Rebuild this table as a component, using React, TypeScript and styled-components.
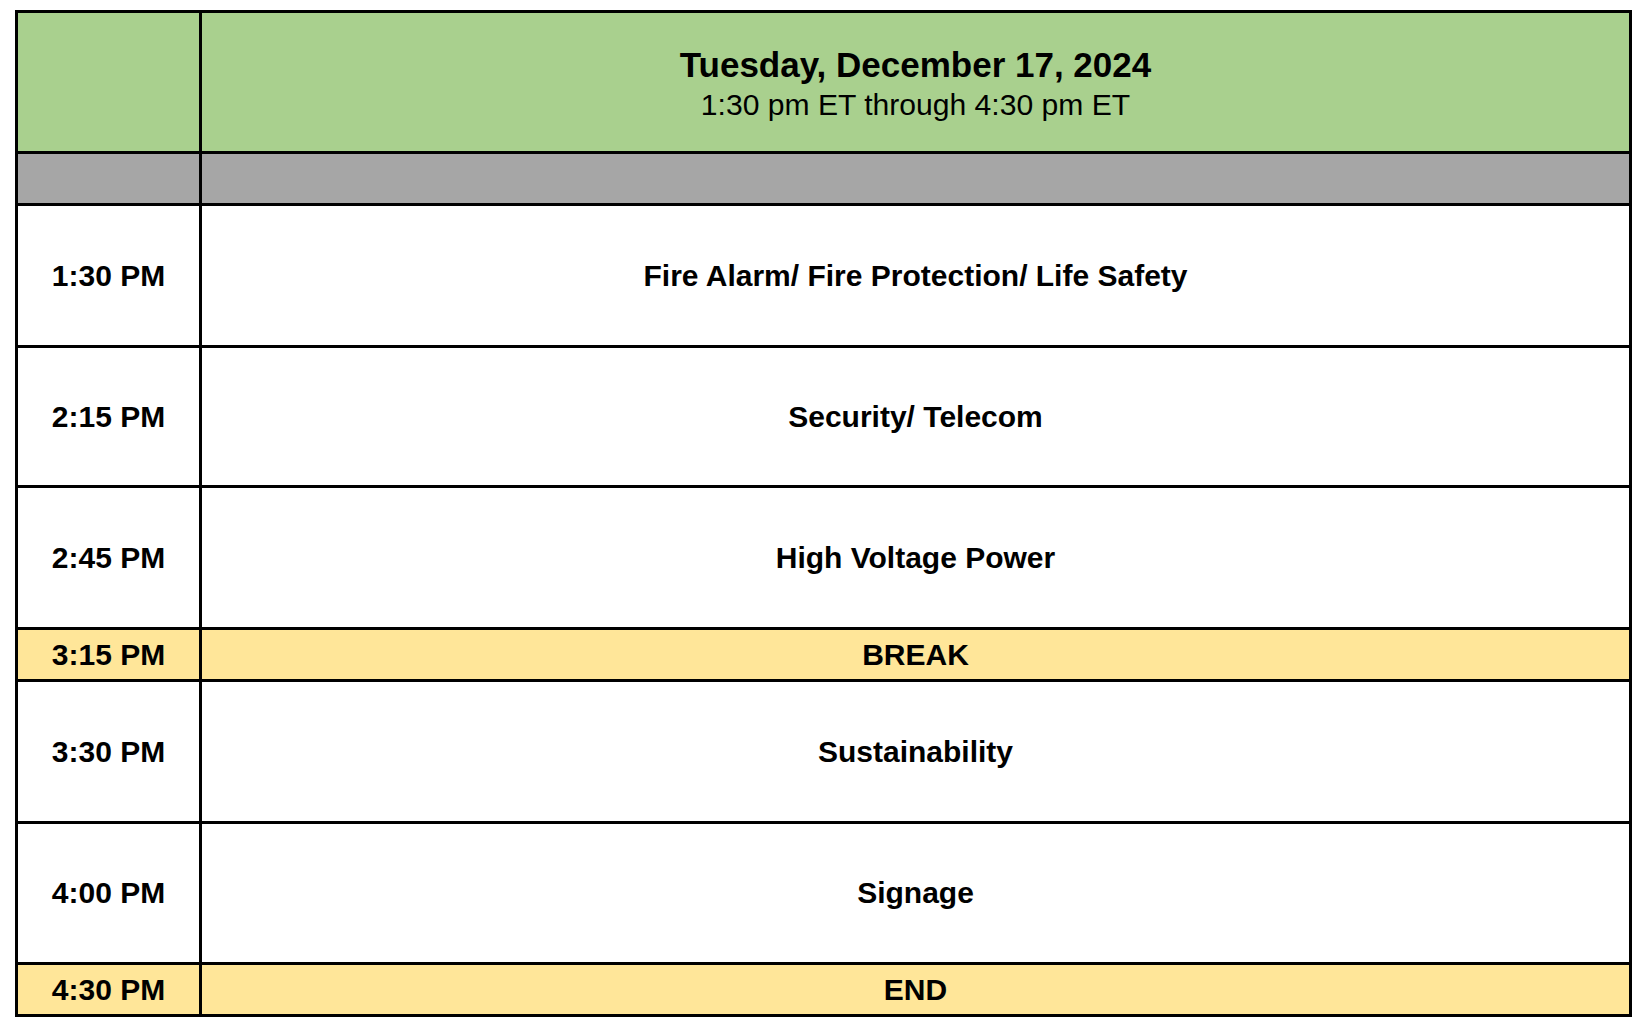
import React from "react";
import styled, { createGlobalStyle } from "styled-components";

const GlobalStyle = createGlobalStyle`
  html, body {
    margin: 0;
    padding: 0;
    background: #ffffff;
  }
  body {
    font-family: "Liberation Sans", Arial, sans-serif;
    color: #000000;
  }
`;

const Page = styled.div`
  padding: 10px 0 0 15px;
`;

const Schedule = styled.div`
  display: grid;
  grid-template-columns: 181px 1427px;
  gap: 3px;
  padding: 3px;
  width: max-content;
  background: #000000;
`;

type Tone = "green" | "gray" | "white" | "yellow";

const toneColors: Record<Tone, string> = {
  green: "#a9d08e",
  gray: "#a6a6a6",
  white: "#ffffff",
  yellow: "#ffe699",
};

const Cell = styled.div<{ $tone: Tone; $h: number }>`
  height: ${(p) => p.$h}px;
  background: ${(p) => toneColors[p.$tone]};
  display: flex;
  flex-direction: column;
  align-items: center;
  justify-content: center;
  text-align: center;
  font-weight: 700;
  font-size: 30px;
  line-height: 1;
  white-space: nowrap;
`;

const HeaderTitle = styled.div`
  font-size: 35px;
  font-weight: 700;
  line-height: 40px;
`;

const HeaderSub = styled.div`
  font-size: 30.1px;
  font-weight: 400;
  line-height: 40px;
`;

const HeaderBlock = styled.div`
  display: flex;
  flex-direction: column;
  align-items: center;
  padding-top: 6px;
`;

type Row = { time: string; title: string; tone: Tone; h: number };

const rows: Row[] = [
  { time: "1:30 PM", title: "Fire Alarm/ Fire Protection/ Life Safety", tone: "white", h: 139 },
  { time: "2:15 PM", title: "Security/ Telecom", tone: "white", h: 137 },
  { time: "2:45 PM", title: "High Voltage Power", tone: "white", h: 139 },
  { time: "3:15 PM", title: "BREAK", tone: "yellow", h: 49 },
  { time: "3:30 PM", title: "Sustainability", tone: "white", h: 139 },
  { time: "4:00 PM", title: "Signage", tone: "white", h: 138 },
  { time: "4:30 PM", title: "END", tone: "yellow", h: 49 },
];

export default function App() {
  return (
    <>
      <GlobalStyle />
      <Page>
        <Schedule>
          <Cell $tone="green" $h={138} />
          <Cell $tone="green" $h={138}>
            <HeaderBlock>
              <HeaderTitle>Tuesday, December 17, 2024</HeaderTitle>
              <HeaderSub>1:30 pm ET through 4:30 pm ET</HeaderSub>
            </HeaderBlock>
          </Cell>
          <Cell $tone="gray" $h={49} />
          <Cell $tone="gray" $h={49} />
          {rows.map((r) => (
            <React.Fragment key={r.time}>
              <Cell $tone={r.tone} $h={r.h}>{r.time}</Cell>
              <Cell $tone={r.tone} $h={r.h}>{r.title}</Cell>
            </React.Fragment>
          ))}
        </Schedule>
      </Page>
    </>
  );
}
